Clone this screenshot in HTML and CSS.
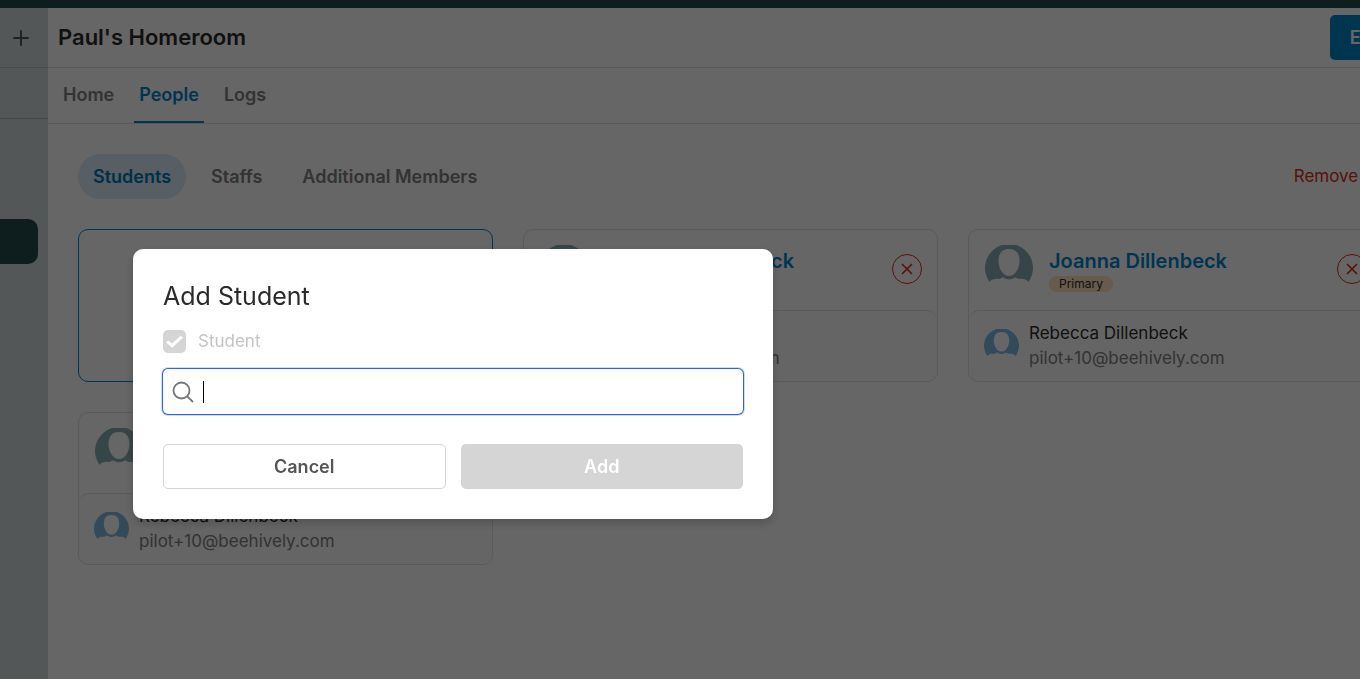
FILE: index.html
```html
<!DOCTYPE html>
<html lang="en">
<head>
    <meta charset="UTF-8">
    <meta name="viewport" content="width=device-width, initial-scale=1.0">
    <title>Paul's Homeroom</title>
    <link rel="stylesheet" href="styles.css">
</head>
<body>
    <!-- Shared icons -->
    <svg class="sprite" aria-hidden="true">
        <symbol id="avatar" viewBox="0 0 48 48">
            <path fill="currentColor" d="M4.500 37A24 24 0 1 1 43.500 37C41.500 34 37.500 33.500 34.500 34C32.500 34.200 31.500 32.800 29.800 32.300C26.500 35 21.500 35 18.200 32.300C16.500 32.800 15.500 34.200 13.500 34C10.500 33.500 6.500 34 4.500 37Z"/>
            <path fill="#fff" d="M24 4C31 4 34.500 8.500 34.500 16C34.500 23.500 30 31 24 31S13.500 23.500 13.500 16C13.500 8.500 17 4 24 4Z"/>
        </symbol>
        <symbol id="cross" viewBox="0 0 12 12">
            <path d="M1.500 1.500L10.500 10.500M10.500 1.500L1.500 10.500" fill="none" stroke="currentColor" stroke-width="1.700" stroke-linecap="round"/>
        </symbol>
    </svg>

    <div class="topbar"></div>
    <div class="app">
        <aside class="sidebar">
            <div class="sidebar-add">
                <button type="button" class="plus" aria-label="Add">
                    <svg width="16" height="16" viewBox="0 0 16 16"><path d="M8 1V15M1 8H15" stroke="currentColor" stroke-width="2" stroke-linecap="round"/></svg>
                </button>
            </div>
            <div class="sidebar-row"></div>
            <a href="#" class="sidebar-active" aria-label="Homeroom"></a>
        </aside>

        <main class="main">
            <header class="header">
                <h1>Paul's Homeroom</h1>
                <button type="button" class="edit">Edit</button>
            </header>

            <nav class="tabs">
                <a href="#">Home</a>
                <a href="#" class="active">People</a>
                <a href="#">Logs</a>
            </nav>

            <section class="content">
                <div class="filters">
                    <button type="button" class="pill active">Students</button>
                    <button type="button" class="pill">Staffs</button>
                    <button type="button" class="pill">Additional Members</button>
                    <a href="#" class="remove">Remove All</a>
                </div>

                <div class="cards">
                    <button type="button" class="card add-card" aria-label="Add student"></button>

                    <article class="card">
                        <div class="card-head">
                            <svg class="avatar"><use href="#avatar"/></svg>
                            <div class="student">
                                <a href="#">Johanna Dillenbeck</a>
                                <span class="badge">Primary</span>
                            </div>
                            <button type="button" class="close" aria-label="Remove student"><svg><use href="#cross"/></svg></button>
                        </div>
                        <div class="parent">
                            <svg class="avatar small"><use href="#avatar"/></svg>
                            <div>
                                <p>Rebecca Dillenbeck</p>
                                <p class="email">pilot+10@beehively.com</p>
                            </div>
                        </div>
                    </article>

                    <article class="card">
                        <div class="card-head">
                            <svg class="avatar"><use href="#avatar"/></svg>
                            <div class="student">
                                <a href="#">Joanna Dillenbeck</a>
                                <span class="badge">Primary</span>
                            </div>
                            <button type="button" class="close" aria-label="Remove student"><svg><use href="#cross"/></svg></button>
                        </div>
                        <div class="parent">
                            <svg class="avatar small"><use href="#avatar"/></svg>
                            <div>
                                <p>Rebecca Dillenbeck</p>
                                <p class="email">pilot+10@beehively.com</p>
                            </div>
                        </div>
                    </article>

                    <article class="card">
                        <div class="card-head">
                            <svg class="avatar"><use href="#avatar"/></svg>
                            <div class="student">
                                <a href="#">Paul Dillenbeck</a>
                                <span class="badge">Primary</span>
                            </div>
                            <button type="button" class="close" aria-label="Remove student"><svg><use href="#cross"/></svg></button>
                        </div>
                        <div class="parent">
                            <svg class="avatar small"><use href="#avatar"/></svg>
                            <div>
                                <p>Rebecca Dillenbeck</p>
                                <p class="email">pilot+10@beehively.com</p>
                            </div>
                        </div>
                    </article>
                </div>
            </section>
        </main>
    </div>

    <div class="overlay">
        <form class="modal" role="dialog" aria-labelledby="modal-title">
            <h2 id="modal-title">Add Student</h2>
            <div class="check">
                <input type="checkbox" id="student" checked disabled>
                <label for="student">Student</label>
            </div>
            <div class="search">
                <svg width="22" height="22" viewBox="0 0 22 22"><circle cx="9.500" cy="9.500" r="8" fill="none" stroke="currentColor" stroke-width="1.800"/><path d="M15.300 15.300L20.500 20.500" stroke="currentColor" stroke-width="1.800" stroke-linecap="round"/></svg>
                <span class="caret"></span>
                <input type="text" aria-label="Search students" autocomplete="off">
            </div>
            <div class="actions">
                <button type="button" class="cancel">Cancel</button>
                <button type="submit" class="add" disabled>Add</button>
            </div>
        </form>
    </div>
</body>
</html>
```
FILE: styles.css
```css
* {
    box-sizing: border-box;
}
body {
    margin: 0;
    min-height: 100vh;
    display: flex;
    flex-direction: column;
    overflow: hidden;
    font-family: Inter, "Open Sans", sans-serif;
    font-size: 17px;
    line-height: 25px;
    color: #2b2b2b;
    background: #fff;
}
button, input {
    font: inherit;
}
button {
    border: none;
    padding: 0;
    cursor: pointer;
}
a {
    text-decoration: none;
}
h1, h2, p {
    margin: 0;
}
.sprite {
    display: none;
}
.topbar {
    height: 8px;
    background: #254d4b;
}
.app {
    flex: 1;
    display: flex;
    margin-right: -53px;
}

/* Sidebar */
.sidebar {
    width: 48px;
    background: #d0dadd;
}
.sidebar-add {
    height: 60px;
    padding-left: 13px;
    display: flex;
    align-items: center;
    border-bottom: 1px solid #b3bfc2;
}
.plus {
    display: flex;
    background: none;
    color: #555;
}
.sidebar-row {
    height: 51px;
    border-bottom: 1px solid #a3afb2;
}
.sidebar-active {
    display: block;
    width: 38px;
    height: 45px;
    margin-top: 100px;
    border-radius: 0 10px 10px 0;
    background: #254d4b;
}

/* Header */
.main {
    flex: 1;
}
.header {
    height: 60px;
    padding: 0 10px;
    display: flex;
    align-items: center;
    justify-content: space-between;
    border-bottom: 1px solid #e0e0e0;
}
h1 {
    font-size: 22px;
    font-weight: 600;
}
.edit {
    height: 45px;
    padding: 0 20px;
    border-radius: 5px;
    background: #0086c9;
    color: #fff;
    font-size: 18px;
    font-weight: 600;
}
.tabs {
    height: 56px;
    padding: 0 10px;
    display: flex;
    gap: 15px;
    border-bottom: 1px solid #e0e0e0;
}
.tabs a {
    padding: 14px 5px 0;
    color: #808080;
    font-size: 18px;
    font-weight: 600;
}
.tabs .active {
    color: #0086c9;
    border-bottom: 2px solid #0086c9;
}

/* Content */
.content {
    padding: 30px;
}
.filters {
    display: flex;
    align-items: center;
    gap: 10px;
    margin-bottom: 30px;
}
.pill {
    height: 45px;
    padding: 0 15px;
    border-radius: 23px;
    background: none;
    color: #808080;
    font-size: 18px;
    font-weight: 600;
}
.pill.active {
    background: #d9ebf9;
    color: #0077b5;
}
.remove {
    margin-left: auto;
    color: #d92d20;
}
.cards {
    display: grid;
    grid-template-columns: repeat(3, 1fr);
    gap: 30px;
}
.card {
    border: 1px solid #e0e0e0;
    border-radius: 10px;
}
.add-card {
    background: #fff;
    border-color: #0086c9;
}
.card-head {
    height: 80px;
    padding: 0 15px 2px 16px;
    display: flex;
    align-items: center;
    gap: 16px;
}
.avatar {
    width: 48px;
    height: 48px;
    flex: none;
    color: #88b0b4;
}
.avatar.small {
    width: 35px;
    height: 35px;
    color: #7fb8e4;
}
.student {
    flex: 1;
    display: flex;
    flex-direction: column;
    align-items: flex-start;
}
.student a {
    line-height: 30px;
    color: #0086c9;
    font-size: 20px;
    font-weight: 600;
}
.badge {
    padding: 0 10px;
    border-radius: 8px;
    background: #ffe3bf;
    font-size: 12px;
    line-height: 16px;
}
.close {
    width: 30px;
    height: 30px;
    display: flex;
    align-items: center;
    justify-content: center;
    border: 1px solid #d92d20;
    border-radius: 50%;
    background: none;
    color: #d92d20;
}
.close svg {
    width: 12px;
    height: 12px;
}
.parent {
    padding: 10px 15px;
    display: flex;
    align-items: center;
    gap: 10px;
    border-top: 1px solid #e0e0e0;
    border-radius: 10px;
    background: #fcfcfc;
}
.email {
    color: #808080;
}

/* Dialog */
.overlay {
    position: fixed;
    inset: 0;
    padding: 249px 0 0 133px;
    background: rgba(0,0,0,0.6);
}
.modal {
    width: 100%;
    max-width: 640px;
    padding: 30px;
    border-radius: 10px;
    background: #fff;
    box-shadow: 0 4px 10px rgba(0,0,0,0.2);
}
h2 {
    margin-bottom: 15px;
    font-size: 25px;
    font-weight: 400;
    line-height: 35px;
}
.check {
    display: flex;
    align-items: center;
    gap: 12px;
    margin-bottom: 15px;
    color: #c4c4c4;
}
.check input {
    appearance: none;
    width: 23px;
    height: 23px;
    margin: 0;
    display: grid;
    place-items: center;
    border-radius: 5px;
    background: #d5d5d5;
}
.check input::before {
    content: "";
    width: 17px;
    height: 13px;
    background: #fff;
    clip-path: polygon(0 57%, 13% 42%, 36% 66%, 86% 6%, 100% 20%, 37% 98%);
}
.search {
    height: 45px;
    padding: 0 9px;
    display: flex;
    align-items: center;
    gap: 9px;
    margin-bottom: 30px;
    border-radius: 5px;
    color: #757575;
    box-shadow: 0 0 0 1px #2b66e3, 0 0 0 2px #cfdcf7;
}
.caret {
    width: 1px;
    height: 22px;
    background: #000;
}
.search input {
    flex: 1;
    padding: 0;
    border: none;
    outline: none;
    background: none;
}
.actions {
    display: grid;
    grid-template-columns: 1fr 1fr;
    gap: 15px;
}
.actions button {
    height: 45px;
    border-radius: 5px;
    font-size: 18px;
    font-weight: 600;
}
.cancel {
    border: 1px solid #d5d5d5;
    background: #fff;
    color: #555;
}
.add {
    background: #d5d5d5;
    color: #fff;
}
```
